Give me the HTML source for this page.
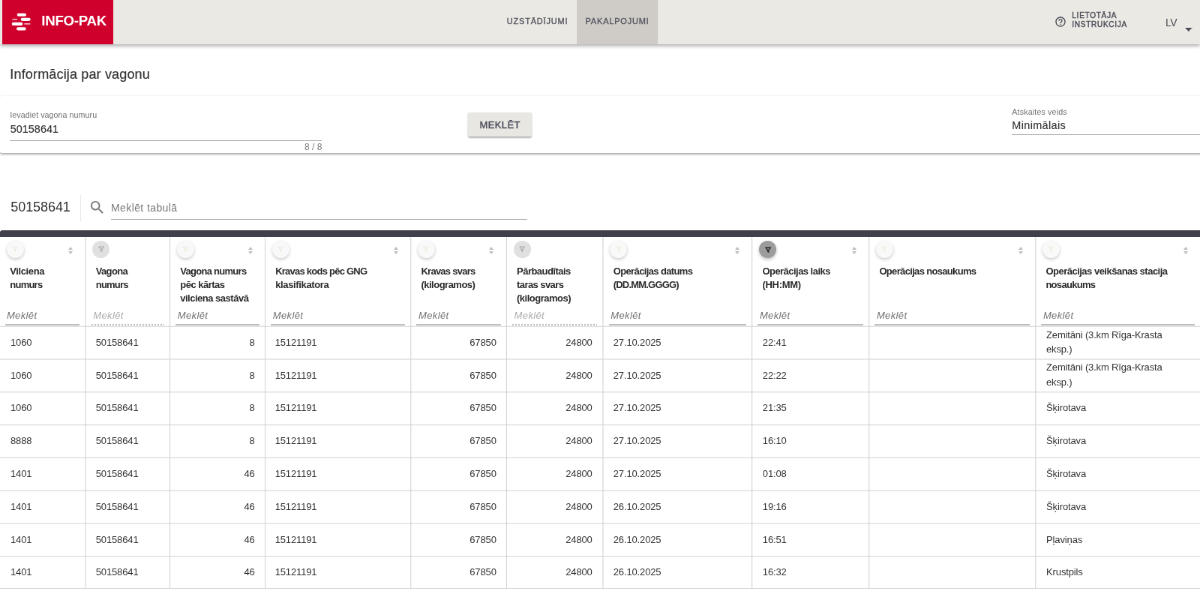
<!DOCTYPE html><html lang="lv"><head><meta charset="utf-8"><title>INFO-PAK</title><style>
*{box-sizing:border-box;margin:0;padding:0}
h1{font-weight:normal}
button{border:0;font-family:inherit;display:block}
html,body{width:1200px;height:589px;overflow:hidden;background:#fff}
body{font-family:"Liberation Sans",sans-serif;color:#333;position:relative;font-size:12px}
.abs{position:absolute;white-space:nowrap}
.wrap{position:absolute;left:0;top:0;width:1200px;height:589px;overflow:hidden;zoom:1.33334;transform:scale(.75);transform-origin:0 0;will-change:transform}
.hdr{position:absolute;left:0;top:0;width:1200px;height:44px;background:#ebe9e4;box-shadow:0 2px 4px rgba(0,0,0,.36)}
.logo{position:absolute;left:2px;top:0;width:111px;height:44px;background:#d0002d}
.logo svg{position:absolute;left:9px;top:13px}
.logo b{position:absolute;left:39.500px;top:13px;font-size:14px;line-height:16px;color:#fff;font-weight:bold;letter-spacing:-.2px}
.nav{position:absolute;top:16.300px;font-size:8.25px;line-height:10px;white-space:nowrap;font-weight:normal;-webkit-text-stroke:.26px #55555f;color:#55555f;letter-spacing:.6px}
.tabbg{position:absolute;left:577px;top:0;width:81px;height:44px;background:#cfccc8}
.card{position:absolute;left:0;top:96px;width:1202px;height:57px;background:#fff;border-radius:2px;box-shadow:0 1px 2px rgba(0,0,0,.32),0 0 1.500px rgba(0,0,0,.04)}
.ul{position:absolute;height:1.100px;background:#adadad}
.btn{position:absolute;left:468.100px;top:112.600px;width:63.800px;height:24.200px;border-radius:2px;background:#e9e7e2;box-shadow:0 1px 1.500px rgba(0,0,0,.3),0 0 1px rgba(0,0,0,.1);font-size:9.75px;font-weight:normal;-webkit-text-stroke:.28px #4c4c5a;color:#4c4c5a;letter-spacing:.3px;text-align:center;line-height:26px}
.tbl{position:absolute;left:0;top:0;width:1200px;height:589px}
.darkbar{position:absolute;left:0;top:230px;width:1203px;height:7px;background:#40404c;border-radius:2.500px 2.500px 0 0}
.grid{position:absolute;left:0;top:0}
.th{position:absolute;top:237px;height:89px}
.fb{position:absolute;left:6.700px;top:3.800px;width:17.200px;height:17.200px;border-radius:50%;display:block}
.th.n .fb{left:7.500px}
.fb svg{position:absolute;left:5.500px;top:5.400px}
.fb-w{background:#f9f9f9;box-shadow:0 1.500px 3px rgba(0,0,0,.2),0 0 1px rgba(0,0,0,.08);color:#efebdf}
.fb-g{background:#e0e0e0;color:#a6a6a6}
.fb-d{background:#9c9c9c;color:#303030;box-shadow:0 1.500px 3px rgba(0,0,0,.25);width:17.600px;height:17.600px}
.th.n .fb-d{left:7.500px;top:3.700px}
.fb-d svg{left:6.200px;top:5.900px}
.sort{position:absolute;right:11.200px;top:9.900px;width:6px;height:8px}
.th.n .sort{right:10.800px}
.sort i{position:absolute;left:.150px;width:0;height:0;border-left:2.850px solid transparent;border-right:2.850px solid transparent}
.sort .up{top:0;border-bottom:3.400px solid #bebebe}
.sort .dn{top:4px;border-top:3.400px solid #bebebe}
.th.n .ht{left:10.800px}
.ht{position:absolute;left:10px;top:27.600px;font-size:9.75px;line-height:13.500px;font-weight:bold;color:#2b2b2b;white-space:nowrap}
.hs{position:absolute;left:5px;right:5.200px;top:71.800px;height:16.600px;font-size:9.75px;font-style:italic;color:#727272;line-height:13.900px;letter-spacing:.28px;background:linear-gradient(#bdbdbd,#bdbdbd) left bottom/100% 1.500px no-repeat}
.hs span{position:absolute;left:1.700px;top:0}
.th.n .hs{left:6.200px}
.th.n .hs span{left:2px}
.hs.dis,.th.n .hs.dis{color:#ababab;background:repeating-linear-gradient(90deg,#bdbdbd 0,#bdbdbd 1.500px,transparent 1.500px,transparent 3px) left bottom/100% 1.500px no-repeat}
.tr{position:absolute;left:0;width:1200px;height:32.800px}
.td{position:absolute;top:0;height:31.900px;font-size:9.75px;line-height:31.460px;color:#333;white-space:nowrap;padding:0 10.200px 0 11.300px;letter-spacing:-.1px}
.td.c0{padding-left:10.500px}
.td.ra{text-align:right}
.td.two{line-height:14.625px;padding-top:.5px;letter-spacing:-.13px}

</style></head><body>
<div class="wrap">
<header class="hdr">
 <div class="logo">
  <svg width="20" height="18" viewBox="0 0 20 18"><g fill="#fff"><rect x="5.8" y="0.5" width="9.2" height="3" rx="1.5"/><rect x="9.5" y="5" width="9.8" height="3.2" rx="1.6"/><rect x="1" y="6.2" width="5" height="0.9"/><rect x="0.5" y="9.5" width="11" height="3.3" rx="1.65"/><rect x="13" y="10.7" width="6" height="0.9"/><rect x="5.3" y="14.5" width="9.5" height="3.1" rx="1.55"/></g></svg>
  <b>INFO-PAK</b>
 </div>
 <div class="tabbg"></div>
 <a class="nav" style="left:506.800px">UZSTĀDĪJUMI</a>
 <a class="nav" style="left:585.400px">PAKALPOJUMI</a>
 <svg class="abs" style="left:1054.400px;top:16.100px" width="12" height="12" viewBox="0 0 24 24"><path fill="#4a4a55" d="M11 18h2v-2h-2v2zm1-16C6.48 2 2 6.48 2 12s4.48 10 10 10 10-4.48 10-10S17.52 2 12 2zm0 18c-4.41 0-8-3.590-8-8s3.590-8 8-8 8 3.590 8 8-3.590 8-8 8zm0-14c-2.210 0-4 1.790-4 4h2c0-1.100.9-2 2-2s2 .9 2 2c0 2-3 1.750-3 5h2c0-2.250 3-2.500 3-5 0-2.210-1.790-4-4-4z"/></svg>
 <div class="abs" style="left:1072px;top:11.200px;font-size:7.5px;line-height:9.400px;font-weight:normal;-webkit-text-stroke:.32px #4e4e5a;color:#4e4e5a;letter-spacing:.55px">LIETOTĀJA<br>INSTRUKCIJA</div>
 <div class="abs" style="left:1165.500px;top:16.500px;font-size:10.5px;line-height:13px;color:#4a4a55;letter-spacing:-.3px">LV</div>
 <svg class="abs" style="left:1185.200px;top:28px" width="7.200" height="3.600" viewBox="0 0 6 3"><path d="M0 0h6l-3 3z" fill="#4a4a55"/></svg>
</header>
<h1 class="abs" style="left:10px;top:65px;font-size:13.5px;line-height:18px;color:#333;-webkit-text-stroke:.15px #333;letter-spacing:.12px">Informācija par vagonu</h1>
<div class="card"></div>
<div class="abs" style="left:10px;top:110px;font-size:8px;line-height:10px;color:#707070;letter-spacing:.05px">Ievadiet vagona numuru</div>
<div class="abs" style="left:10.400px;top:122px;font-size:10.8px;line-height:14px;color:#333;-webkit-text-stroke:.1px #333">50158641</div>
<div class="ul" style="left:10px;top:139.900px;width:312px"></div>
<div class="abs" style="left:272px;top:142.400px;width:50px;text-align:right;font-size:9px;line-height:10px;color:#7a7a7a">8 / 8</div>
<button class="btn" type="button">MEKLĒT</button>
<div class="abs" style="left:1012px;top:107px;font-size:8px;line-height:10px;color:#707070;letter-spacing:.12px">Atskaites veids</div>
<div class="abs" style="left:1012px;top:118.500px;font-size:10.8px;line-height:14px;color:#333;-webkit-text-stroke:.1px #333;letter-spacing:.28px">Minimālais</div>
<div class="ul" style="left:1012px;top:134px;width:188px"></div>
<div class="abs" style="left:10.700px;top:198.300px;font-size:13.5px;line-height:18px;color:#333;letter-spacing:-.05px">50158641</div>
<div class="abs" style="left:80px;top:195px;width:1px;height:26.500px;background:#e8e8e8"></div>
<svg class="abs" style="left:88.300px;top:198.700px" width="17.400" height="17.400" viewBox="0 0 24 24"><path fill="#7c7c7c" d="M15.5 14h-.79l-.28-.27C15.410 12.590 16 11.110 16 9.500 16 5.910 13.090 3 9.500 3S3 5.910 3 9.500 5.910 16 9.500 16c1.610 0 3.090-.590 4.230-1.570l.27.28v.79l5 4.990L20.490 19l-4.990-5zm-6 0C7.010 14 5 11.990 5 9.500S7.010 5 9.500 5 14 7.010 14 9.500 11.990 14 9.500 14z"/></svg>
<div class="abs" style="left:111px;top:201.200px;font-size:10.5px;line-height:14px;color:#777;letter-spacing:.3px">Meklēt tabulā</div>
<div class="ul" style="left:111px;top:219px;width:416px"></div>
<div class="tbl">
<div class="darkbar"></div>
<svg class="grid" width="1200" height="589" viewBox="0 0 1200 589"><g fill="#d2d2d2"><rect x="85.10" y="237" width="0.8" height="352"/><rect x="169.50" y="237" width="0.8" height="352"/><rect x="264.70" y="237" width="0.8" height="352"/><rect x="410.40" y="237" width="0.8" height="352"/><rect x="506.20" y="237" width="0.8" height="352"/><rect x="602.60" y="237" width="0.8" height="352"/><rect x="751.60" y="237" width="0.8" height="352"/><rect x="868.60" y="237" width="0.8" height="352"/><rect x="1035.20" y="237" width="0.8" height="352"/><rect x="0" y="326.05" width="1200" height="0.8"/><rect x="0" y="358.88" width="1200" height="0.8"/><rect x="0" y="391.71" width="1200" height="0.8"/><rect x="0" y="424.54" width="1200" height="0.8"/><rect x="0" y="457.37" width="1200" height="0.8"/><rect x="0" y="490.20" width="1200" height="0.8"/><rect x="0" y="523.03" width="1200" height="0.8"/><rect x="0" y="555.86" width="1200" height="0.8"/><rect x="0" y="588.15" width="1200" height="0.8"/></g></svg>
<div class="th" style="left:0px;width:85.0px"><span class="fb fb-w"><svg viewBox="0 0 24 24" width="6.2" height="6.2"><path d="M2.500 3h19l-7.500 9.500v8.500l-4-3v-5.500z" fill="none" stroke="currentColor" stroke-width="3" stroke-linejoin="round"/></svg></span><span class="sort"><i class="up"></i><i class="dn"></i></span><div class="ht"><span style="letter-spacing:-0.30px">Vilciena</span><br><span style="letter-spacing:-0.58px">numurs</span></div><div class="hs"><span>Meklēt</span></div></div>
<div class="th n" style="left:85px;width:84.4px"><span class="fb fb-g"><svg viewBox="0 0 24 24" width="6.2" height="6.2"><path d="M2.500 3h19l-7.500 9.500v8.500l-4-3v-5.500z" fill="none" stroke="currentColor" stroke-width="3" stroke-linejoin="round"/></svg></span><div class="ht"><span style="letter-spacing:-0.48px">Vagona</span><br><span style="letter-spacing:-0.58px">numurs</span></div><div class="hs dis"><span>Meklēt</span></div></div>
<div class="th n" style="left:169.4px;width:95.2px"><span class="fb fb-w"><svg viewBox="0 0 24 24" width="6.2" height="6.2"><path d="M2.500 3h19l-7.500 9.500v8.500l-4-3v-5.500z" fill="none" stroke="currentColor" stroke-width="3" stroke-linejoin="round"/></svg></span><span class="sort"><i class="up"></i><i class="dn"></i></span><div class="ht"><span style="letter-spacing:-0.54px">Vagona numurs</span><br><span style="letter-spacing:-0.38px">pēc kārtas</span><br><span style="letter-spacing:-0.37px">vilciena sastāvā</span></div><div class="hs"><span>Meklēt</span></div></div>
<div class="th n" style="left:264.6px;width:145.7px"><span class="fb fb-w"><svg viewBox="0 0 24 24" width="6.2" height="6.2"><path d="M2.500 3h19l-7.500 9.500v8.500l-4-3v-5.500z" fill="none" stroke="currentColor" stroke-width="3" stroke-linejoin="round"/></svg></span><span class="sort"><i class="up"></i><i class="dn"></i></span><div class="ht"><span style="letter-spacing:-0.57px">Kravas kods pēc GNG</span><br><span style="letter-spacing:-0.27px">klasifikatora</span></div><div class="hs"><span>Meklēt</span></div></div>
<div class="th n" style="left:410.3px;width:95.7px"><span class="fb fb-w"><svg viewBox="0 0 24 24" width="6.2" height="6.2"><path d="M2.500 3h19l-7.500 9.500v8.500l-4-3v-5.500z" fill="none" stroke="currentColor" stroke-width="3" stroke-linejoin="round"/></svg></span><span class="sort"><i class="up"></i><i class="dn"></i></span><div class="ht"><span style="letter-spacing:-0.56px">Kravas svars</span><br><span style="letter-spacing:-0.38px">(kilogramos)</span></div><div class="hs"><span>Meklēt</span></div></div>
<div class="th n" style="left:506px;width:96.5px"><span class="fb fb-g"><svg viewBox="0 0 24 24" width="6.2" height="6.2"><path d="M2.500 3h19l-7.500 9.500v8.500l-4-3v-5.500z" fill="none" stroke="currentColor" stroke-width="3" stroke-linejoin="round"/></svg></span><div class="ht"><span style="letter-spacing:-0.40px">Pārbaudītais</span><br><span style="letter-spacing:-0.43px">taras svars</span><br><span style="letter-spacing:-0.38px">(kilogramos)</span></div><div class="hs dis"><span>Meklēt</span></div></div>
<div class="th n" style="left:602.5px;width:149.0px"><span class="fb fb-w"><svg viewBox="0 0 24 24" width="6.2" height="6.2"><path d="M2.500 3h19l-7.500 9.500v8.500l-4-3v-5.500z" fill="none" stroke="currentColor" stroke-width="3" stroke-linejoin="round"/></svg></span><span class="sort"><i class="up"></i><i class="dn"></i></span><div class="ht"><span style="letter-spacing:-0.47px">Operācijas datums</span><br><span style="letter-spacing:-0.60px">(DD.MM.GGGG)</span></div><div class="hs"><span>Meklēt</span></div></div>
<div class="th n" style="left:751.5px;width:117.0px"><span class="fb fb-d"><svg viewBox="0 0 24 24" width="6.2" height="6.2"><path d="M2.500 3h19l-7.500 9.500v8.500l-4-3v-5.500z" fill="none" stroke="currentColor" stroke-width="4.200" stroke-linejoin="round"/></svg></span><span class="sort"><i class="up"></i><i class="dn"></i></span><div class="ht"><span style="letter-spacing:-0.40px">Operācijas laiks</span><br><span style="letter-spacing:-0.21px">(HH:MM)</span></div><div class="hs"><span>Meklēt</span></div></div>
<div class="th n" style="left:868.5px;width:166.5px"><span class="fb fb-w"><svg viewBox="0 0 24 24" width="6.2" height="6.2"><path d="M2.500 3h19l-7.500 9.500v8.500l-4-3v-5.500z" fill="none" stroke="currentColor" stroke-width="3" stroke-linejoin="round"/></svg></span><span class="sort"><i class="up"></i><i class="dn"></i></span><div class="ht"><span style="letter-spacing:-0.50px">Operācijas nosaukums</span></div><div class="hs"><span>Meklēt</span></div></div>
<div class="th n" style="left:1035px;width:165.0px"><span class="fb fb-w"><svg viewBox="0 0 24 24" width="6.2" height="6.2"><path d="M2.500 3h19l-7.500 9.500v8.500l-4-3v-5.500z" fill="none" stroke="currentColor" stroke-width="3" stroke-linejoin="round"/></svg></span><span class="sort"><i class="up"></i><i class="dn"></i></span><div class="ht"><span style="letter-spacing:-0.38px">Operācijas veikšanas stacija</span><br><span style="letter-spacing:-0.53px">nosaukums</span></div><div class="hs"><span>Meklēt</span></div></div>
<div class="tr" style="top:326.9px"><div class="td c0" style="left:0.0px;width:85.0px"><span>1060</span></div><div class="td" style="left:84.5px;width:84.4px"><span>50158641</span></div><div class="td ra" style="left:169.8px;width:95.2px"><span>8</span></div><div class="td" style="left:263.7px;width:145.7px"><span>15121191</span></div><div class="td ra" style="left:410.8px;width:95.7px"><span>67850</span></div><div class="td ra" style="left:506.0px;width:96.5px"><span>24800</span></div><div class="td" style="left:602.0px;width:149.0px"><span>27.10.2025</span></div><div class="td" style="left:751.3px;width:117.0px"><span>22:41</span></div><div class="td two" style="left:1035.0px;width:165.0px"><span>Zemitāni (3.km Rīga-Krasta<br>eksp.)</span></div></div>
<div class="tr" style="top:359.73px"><div class="td c0" style="left:0.0px;width:85.0px"><span>1060</span></div><div class="td" style="left:84.5px;width:84.4px"><span>50158641</span></div><div class="td ra" style="left:169.8px;width:95.2px"><span>8</span></div><div class="td" style="left:263.7px;width:145.7px"><span>15121191</span></div><div class="td ra" style="left:410.8px;width:95.7px"><span>67850</span></div><div class="td ra" style="left:506.0px;width:96.5px"><span>24800</span></div><div class="td" style="left:602.0px;width:149.0px"><span>27.10.2025</span></div><div class="td" style="left:751.3px;width:117.0px"><span>22:22</span></div><div class="td two" style="left:1035.0px;width:165.0px"><span>Zemitāni (3.km Rīga-Krasta<br>eksp.)</span></div></div>
<div class="tr" style="top:392.56px"><div class="td c0" style="left:0.0px;width:85.0px"><span>1060</span></div><div class="td" style="left:84.5px;width:84.4px"><span>50158641</span></div><div class="td ra" style="left:169.8px;width:95.2px"><span>8</span></div><div class="td" style="left:263.7px;width:145.7px"><span>15121191</span></div><div class="td ra" style="left:410.8px;width:95.7px"><span>67850</span></div><div class="td ra" style="left:506.0px;width:96.5px"><span>24800</span></div><div class="td" style="left:602.0px;width:149.0px"><span>27.10.2025</span></div><div class="td" style="left:751.3px;width:117.0px"><span>21:35</span></div><div class="td" style="left:1035.0px;width:165.0px"><span>Šķirotava</span></div></div>
<div class="tr" style="top:425.39px"><div class="td c0" style="left:0.0px;width:85.0px"><span>8888</span></div><div class="td" style="left:84.5px;width:84.4px"><span>50158641</span></div><div class="td ra" style="left:169.8px;width:95.2px"><span>8</span></div><div class="td" style="left:263.7px;width:145.7px"><span>15121191</span></div><div class="td ra" style="left:410.8px;width:95.7px"><span>67850</span></div><div class="td ra" style="left:506.0px;width:96.5px"><span>24800</span></div><div class="td" style="left:602.0px;width:149.0px"><span>27.10.2025</span></div><div class="td" style="left:751.3px;width:117.0px"><span>16:10</span></div><div class="td" style="left:1035.0px;width:165.0px"><span>Šķirotava</span></div></div>
<div class="tr" style="top:458.22px"><div class="td c0" style="left:0.0px;width:85.0px"><span>1401</span></div><div class="td" style="left:84.5px;width:84.4px"><span>50158641</span></div><div class="td ra" style="left:169.8px;width:95.2px"><span>46</span></div><div class="td" style="left:263.7px;width:145.7px"><span>15121191</span></div><div class="td ra" style="left:410.8px;width:95.7px"><span>67850</span></div><div class="td ra" style="left:506.0px;width:96.5px"><span>24800</span></div><div class="td" style="left:602.0px;width:149.0px"><span>27.10.2025</span></div><div class="td" style="left:751.3px;width:117.0px"><span>01:08</span></div><div class="td" style="left:1035.0px;width:165.0px"><span>Šķirotava</span></div></div>
<div class="tr" style="top:491.05px"><div class="td c0" style="left:0.0px;width:85.0px"><span>1401</span></div><div class="td" style="left:84.5px;width:84.4px"><span>50158641</span></div><div class="td ra" style="left:169.8px;width:95.2px"><span>46</span></div><div class="td" style="left:263.7px;width:145.7px"><span>15121191</span></div><div class="td ra" style="left:410.8px;width:95.7px"><span>67850</span></div><div class="td ra" style="left:506.0px;width:96.5px"><span>24800</span></div><div class="td" style="left:602.0px;width:149.0px"><span>26.10.2025</span></div><div class="td" style="left:751.3px;width:117.0px"><span>19:16</span></div><div class="td" style="left:1035.0px;width:165.0px"><span>Šķirotava</span></div></div>
<div class="tr" style="top:523.88px"><div class="td c0" style="left:0.0px;width:85.0px"><span>1401</span></div><div class="td" style="left:84.5px;width:84.4px"><span>50158641</span></div><div class="td ra" style="left:169.8px;width:95.2px"><span>46</span></div><div class="td" style="left:263.7px;width:145.7px"><span>15121191</span></div><div class="td ra" style="left:410.8px;width:95.7px"><span>67850</span></div><div class="td ra" style="left:506.0px;width:96.5px"><span>24800</span></div><div class="td" style="left:602.0px;width:149.0px"><span>26.10.2025</span></div><div class="td" style="left:751.3px;width:117.0px"><span>16:51</span></div><div class="td" style="left:1035.0px;width:165.0px"><span>Pļaviņas</span></div></div>
<div class="tr" style="top:556.71px"><div class="td c0" style="left:0.0px;width:85.0px"><span>1401</span></div><div class="td" style="left:84.5px;width:84.4px"><span>50158641</span></div><div class="td ra" style="left:169.8px;width:95.2px"><span>46</span></div><div class="td" style="left:263.7px;width:145.7px"><span>15121191</span></div><div class="td ra" style="left:410.8px;width:95.7px"><span>67850</span></div><div class="td ra" style="left:506.0px;width:96.5px"><span>24800</span></div><div class="td" style="left:602.0px;width:149.0px"><span>26.10.2025</span></div><div class="td" style="left:751.3px;width:117.0px"><span>16:32</span></div><div class="td" style="left:1035.0px;width:165.0px"><span>Krustpils</span></div></div>
</div>
</div>
</body></html>
